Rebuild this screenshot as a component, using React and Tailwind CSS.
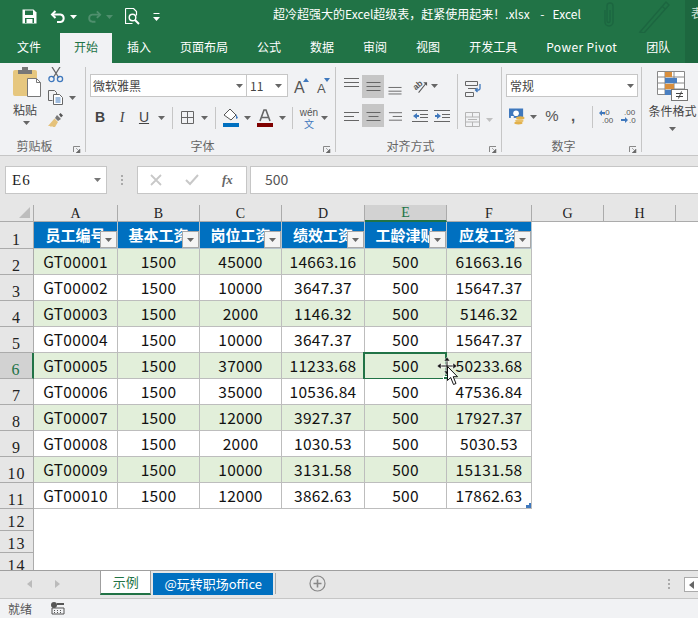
import React from "react";

const CJK = "[font-family:'Noto_Sans_CJK_SC',sans-serif]";
const HEADF = "[font-family:'Liberation_Serif','Noto_Sans_CJK_SC',serif]";
const SANS = "[font-family:'Liberation_Sans',sans-serif]";
const SERIF = "[font-family:'Liberation_Serif',serif]";

const Caret = ({ c = "#666" }) => (
  <svg width="7" height="4" viewBox="0 0 7 4" className="block"><path d="M0 0h7L3.5 4z" fill={c} /></svg>
);
const Slot = ({ className = "", children }) => (
  <div className={"flex items-center justify-center shrink-0 " + className}>{children}</div>
);
const Launcher = () => (
  <svg width="8" height="7" viewBox="0 0 8 7" className="block">
    <path d="M.5 6V.5H7" fill="none" stroke="#888" />
    <path d="M3 2l3.5 3.5M7 3v4H3z" fill="#666" stroke="#777" strokeWidth=".6" />
  </svg>
);
const Lines = ({ ys, align = "left" }) => (
  <svg width="15" height="23" viewBox="0 0 15 23" className="block">
    {ys.map(([y, w], i) => {
      const x = align === "left" ? 0 : align === "right" ? 15 - w : (15 - w) / 2;
      return <rect key={i} x={x} y={y} width={w} height="1" fill="#666" />;
    })}
  </svg>
);
const VSep = ({ className = "" }) => <div className={"w-px bg-[#c6c6c6] " + className} />;

const GroupLabel = ({ text }) => (
  <div className="mt-auto mb-[-2px] flex items-center h-[16px]">
    <span className={"flex-1 text-center text-[12px] leading-[16px] text-[#666] " + CJK}>{text}</span>
    <div className="w-[16px] flex justify-end pr-[4px] pt-[6px]"><Launcher /></div>
  </div>
);

const TitleBar = () => (
  <div className="relative h-[33px] flex items-center bg-[#217346] shrink-0">
    <Slot className="ml-[20px] w-[18px]">
      <svg width="15" height="15" viewBox="0 0 15 15">
        <path d="M.5.5h11l3 3v11H.5z" fill="#fff" />
        <rect x="3" y="1.5" width="8" height="4.5" fill="#217346" />
        <rect x="3" y="9" width="9" height="5" fill="#217346" />
        <rect x="4.5" y="10" width="6" height="4" fill="#fff" />
      </svg>
    </Slot>
    <Slot className="ml-[11px] w-[17px]">
      <svg width="16" height="14" viewBox="0 0 16 14" fill="none" stroke="#fff" strokeWidth="2">
        <path d="M3 4.5h7.5a3.8 3.8 0 0 1 0 7.5H7" />
        <path d="M5.5 1L2 4.5 5.5 8" />
      </svg>
    </Slot>
    <Slot className="ml-[3px] w-[8px]"><Caret c="#fff" /></Slot>
    <Slot className="ml-[8px] w-[18px]">
      <svg width="15" height="14" viewBox="0 0 16 14" fill="none" stroke="#4f8f6d" strokeWidth="2">
        <path d="M13 4.5H5.5a3.8 3.8 0 0 0 0 7.5H9" />
        <path d="M10.5 1L14 4.5 10.5 8" />
      </svg>
    </Slot>
    <Slot className="ml-[2px] w-[8px]"><Caret c="#4f8f6d" /></Slot>
    <Slot className="ml-[9px] w-[20px]">
      <svg width="15" height="17" viewBox="0 0 15 17" fill="none" stroke="#fff">
        <path d="M.5.5h8l3 3v4M.5.5v15h7" strokeWidth="1.2" />
        <circle cx="7.5" cy="9.5" r="3.3" strokeWidth="1.4" />
        <path d="M10 12l4 4" strokeWidth="2" />
      </svg>
    </Slot>
    <Slot className="ml-[9px] w-[10px]">
      <svg width="7" height="8" viewBox="0 0 7 8"><rect width="6" height="1" x=".5" fill="#fff" /><path d="M0 4h7L3.5 8z" fill="#fff" /></svg>
    </Slot>
    <span className={"ml-[112px] mb-[6px] text-[12px] leading-[16px] text-white whitespace-pre " + CJK}>超冷超强大的Excel超级表，赶紧使用起来！.xlsx    -   Excel</span>
    <svg className="absolute left-[600px] top-0" width="80" height="33" viewBox="0 0 80 33" fill="none" stroke="#1c6640" strokeWidth="1.4">
      <path d="M5 10v12a4 4 0 0 0 8 0V6a3 3 0 0 0-6 0v15a1.500 1.500 0 0 0 3 0V10" />
      <path d="M40 32L66 2l3 3-25 28zM62 6l3 3" />
    </svg>
    <div className="absolute right-0 top-0 w-[13px] h-[63px] bg-[#1d673f] overflow-hidden">
      <span className={"block ml-[6px] mt-[5px] text-[12px] leading-[16px] text-[#cfe3d8] whitespace-nowrap " + CJK}>表</span>
    </div>
  </div>
);

const tabs = ["文件", "开始", "插入", "页面布局", "公式", "数据", "审阅", "视图", "开发工具", "Power Pivot", "团队"];
const TabBar = () => (
  <div className="h-[30px] flex bg-[#217346] pl-[3px] shrink-0">
    {tabs.map((t) => (
      <div key={t} className={"h-[30px] px-[14px] pb-[2px] flex items-center text-[12px] whitespace-nowrap " + CJK + (t === "开始" ? " bg-[#f1f2f4] text-[#217346] mr-px" : t === "文件" ? " text-white mr-[5px]" : " text-white mr-px")}>
        {t === "Power Pivot" ? <span className="tracking-[0.4px]">{t}</span> : t}
      </div>
    ))}
  </div>
);

const Clipboard = () => (
  <div className="w-[86px] h-[85px] mt-[4px] border-r border-[#c6c6c6] flex flex-col shrink-0">
    <div className="flex">
      <div className="ml-[13px] w-[28px] flex flex-col items-start">
        <svg width="29" height="30" viewBox="0 0 29 30" className="block">
          <rect y="3" width="24" height="26" rx="2" fill="#e6c77f" />
          <path d="M5 7V3h4V0h6v3h4v4z" fill="#777" />
          <path d="M14.500 11.500h9l4 4v14h-13z" fill="#fff" stroke="#777" />
          <path d="M23.500 11.500v4h4" fill="none" stroke="#777" />
        </svg>
        <span className={"mt-[5px] text-[12px] leading-[16px] text-[#444] whitespace-nowrap " + CJK}>粘贴</span>
        <div className="mt-[3px] ml-[10px]"><Caret /></div>
      </div>
      <div className="ml-[7px] flex flex-col">
        <svg width="16" height="16" viewBox="0 0 16 16" fill="none" className="block">
          <path d="M4 0l7 11M12 0L5 11" stroke="#666" strokeWidth="1.3" />
          <circle cx="3.500" cy="12" r="2.600" stroke="#3f78bd" strokeWidth="1.300" />
          <circle cx="12" cy="12" r="2.600" stroke="#3f78bd" strokeWidth="1.300" />
        </svg>
        <div className="mt-[7px] flex items-center">
          <svg width="16" height="15" viewBox="0 0 16 15" fill="none" className="block">
            <path d="M.5.5h6l2 2v2M.5.5v10h4" stroke="#666" />
            <path d="M5.500 4.500h6l3 3v7h-9z" fill="#fff" stroke="#666" />
            <path d="M7.500 8h5M7.500 10h5M7.500 12h5" stroke="#3f78bd" />
          </svg>
          <div className="ml-[5px]"><Caret /></div>
        </div>
        <svg width="16" height="15" viewBox="0 0 16 15" className="block mt-[8px]">
          <path d="M9 2l4 4-3 2-3-3z" fill="#777" />
          <path d="M11 1.500l1.500-1.500 2.500 2.500-2 2z" fill="#555" />
          <path d="M6.500 5.500l3.500 3.500-3 5H5l-1-1-1 1-1-1-2 0z" fill="#e5c27a" />
        </svg>
      </div>
    </div>
    <GroupLabel text="剪贴板" />
  </div>
);

const Font = () => (
  <div className="w-[250px] h-[85px] mt-[4px] border-r border-[#c6c6c6] flex flex-col shrink-0">
    <div className="flex items-center pl-[4px] pt-[7px]">
      <div className="w-[157px] h-[23px] bg-white border border-[#c6c6c6] flex items-center justify-between pl-[2px] pr-[3px]">
        <span className={"text-[12px] text-[#444] " + CJK}>微软雅黑</span><Caret />
      </div>
      <div className="w-[41px] h-[23px] bg-white border border-[#c6c6c6] border-l-0 flex items-center justify-between pl-[3px] pr-[5px]">
        <span className={"text-[12px] text-[#444] " + CJK}>11</span><Caret />
      </div>
      <div className="ml-[6px] w-[15px] h-[20px] flex items-start">
        <span className={"mt-[3px] text-[16px] leading-[18px] text-[#555] " + SANS}>A</span>
        <svg width="6" height="4" viewBox="0 0 6 4" className="block mt-[2px] ml-[-2px]"><path d="M0 4l3-4 3 4z" fill="#3f78bd" /></svg>
      </div>
      <div className="ml-[8px] w-[15px] h-[20px] flex items-start">
        <span className={"mt-[5px] text-[13px] leading-[15px] text-[#555] " + SANS}>A</span>
        <svg width="6" height="4" viewBox="0 0 6 4" className="block mt-[2px] ml-[-2px]"><path d="M0 0h6L3 4z" fill="#3f78bd" /></svg>
      </div>
    </div>
    <div className="flex items-center pl-[4px] mt-[11px] h-[19px]">
      <Slot className={"w-[20px] text-[14px] font-bold text-[#444] " + SANS}>B</Slot>
      <Slot className={"w-[24px] text-[14px] italic text-[#444] " + SERIF}>I</Slot>
      <Slot className={"w-[20px] text-[14px] underline text-[#444] " + SANS}>U</Slot>
      <Slot className="w-[14px]"><Caret /></Slot>
      <Slot className="w-[8px]"><VSep className="h-[22px]" /></Slot>
      <Slot className="w-[22px]">
        <svg width="13" height="13" viewBox="0 0 13 13" fill="none" stroke="#666"><path d="M.5.5h12v12H.5zM6.500.5v12M.5 6.500h12" /></svg>
      </Slot>
      <Slot className="w-[12px]"><Caret /></Slot>
      <Slot className="w-[10px]"><VSep className="h-[22px]" /></Slot>
      <Slot className="w-[22px]">
        <svg width="16" height="20" viewBox="0 0 16 20">
          <path d="M1 7l6-6 6 6-5 5z" fill="#fff" stroke="#555" />
          <path d="M13 6l2 4-2 1z" fill="#3f78bd" />
          <rect y="15" width="16" height="4" fill="#0070c0" />
        </svg>
      </Slot>
      <Slot className="w-[10px]"><Caret /></Slot>
      <Slot className="w-[26px]">
        <svg width="16" height="20" viewBox="0 0 16 20">
          <path d="M3 13L7 2h2l4 11M4.500 9.500h7" fill="none" stroke="#666" strokeWidth="1.600" />
          <rect y="15" width="16" height="4" fill="#7f0000" />
        </svg>
      </Slot>
      <Slot className="w-[8px]"><Caret /></Slot>
      <Slot className="w-[12px]"><VSep className="h-[22px]" /></Slot>
      <Slot className="w-[22px] flex-col">
        <span className={"text-[10px] leading-[11px] text-[#555] " + SANS}>wén</span>
        <span className={"text-[10px] leading-[11px] text-[#3f78bd] " + CJK}>文</span>
      </Slot>
      <Slot className="w-[8px]"><Caret /></Slot>
    </div>
    <GroupLabel text="字体" />
  </div>
);

const Align = () => (
  <div className="w-[166px] h-[85px] mt-[4px] border-r border-[#c6c6c6] flex flex-col shrink-0">
    <div className="flex pl-[8px] pt-[6px]">
      <div className="flex flex-col w-[96px]">
        <div className="flex items-center h-[25px] pt-[1px]">
          <Slot className="w-[15px] h-[23px]"><Lines ys={[[3, 15], [7, 15], [11, 15]]} /></Slot>
          <Slot className="ml-[3px] w-[22px] h-[23px] bg-[#c6c6c6]"><Lines ys={[[7, 14], [11, 14], [15, 14]]} align="center" /></Slot>
          <Slot className="ml-[4px] w-[14px] h-[23px]"><Lines ys={[[12, 14], [16, 14], [19, 14]]} align="center" /></Slot>
          <Slot className="ml-[10px] w-[16px]">
            <svg width="17" height="17" viewBox="0 0 17 17" fill="none">
              <text x="1" y="11" fontSize="9" fontWeight="700" fill="#555" fontFamily="'Liberation Sans'" transform="rotate(-40 5 8)">ab</text>
              <path d="M7 15L15 5" stroke="#555" strokeWidth="1.100" />
              <path d="M12 4h4v4z" fill="#555" />
            </svg>
          </Slot>
          <Slot className="w-[12px]"><Caret /></Slot>
        </div>
        <div className="flex items-center h-[23px] mt-[6px]">
          <Slot className="w-[15px] h-[23px]"><Lines ys={[[8, 15], [12, 10], [16, 15]]} /></Slot>
          <Slot className="ml-[3px] w-[22px] h-[23px] bg-[#c6c6c6]"><Lines ys={[[8, 14], [12, 10], [16, 14]]} align="center" /></Slot>
          <Slot className="ml-[4px] w-[14px] h-[23px]"><Lines ys={[[8, 14], [12, 10], [16, 14]]} align="right" /></Slot>
          <Slot className="ml-[10px] w-[16px]">
            <svg width="16" height="14" viewBox="0 0 16 14">
              <path d="M0 1h16v1H0zM8 5h8v1H8zM8 8h8v1H8zM0 12h16v1H0z" fill="#666" />
              <path d="M1 7l4-3v2h2v2H5v2z" fill="#3f78bd" />
            </svg>
          </Slot>
          <Slot className="ml-[6px] w-[16px]">
            <svg width="16" height="14" viewBox="0 0 16 14">
              <path d="M0 1h16v1H0zM8 5h8v1H8zM8 8h8v1H8zM0 12h16v1H0z" fill="#666" />
              <path d="M7 7L3 4v2H1v2h2v2z" fill="#3f78bd" />
            </svg>
          </Slot>
        </div>
      </div>
      <VSep className="ml-[17px] h-[55px] mt-[1px]" />
      <div className="ml-[7px] flex flex-col">
        <svg width="18" height="16" viewBox="0 0 18 16" fill="none" className="block mt-[8px]">
          <path d="M.5.5h12v4H.5zM.5 11.500h8v4h-8z" stroke="#666" />
          <path d="M3 7.500h8" stroke="#666" />
          <path d="M15 3v4.500a1.500 1.500 0 0 1-1.500 1.500H11M12.500 7L10.500 9l2 2" stroke="#3f78bd" strokeWidth="1.300" />
        </svg>
        <div className="flex items-center mt-[15px]">
          <svg width="15" height="15" viewBox="0 0 15 15" fill="none" stroke="#b5b5b5" className="block">
            <path d="M.5.5h14v14H.5zM.5 5h14M.5 10h14M7.500.5V5M7.500 10v4.500M3 7.500h9" />
          </svg>
          <div className="ml-[6px]"><Caret c="#c0c0c0" /></div>
        </div>
      </div>
    </div>
    <GroupLabel text="对齐方式" />
  </div>
);

const Num = () => (
  <div className="w-[140px] h-[85px] mt-[4px] border-r border-[#c6c6c6] flex flex-col shrink-0">
    <div className="pl-[4px] pt-[7px]">
      <div className="w-[132px] h-[23px] bg-white border border-[#c6c6c6] flex items-center justify-between pl-[3px] pr-[3px]">
        <span className={"text-[12px] text-[#444] " + CJK}>常规</span><Caret />
      </div>
    </div>
    <div className="flex items-center pl-[7px] mt-[8px] h-[23px]">
      <Slot className="w-[16px]">
        <svg width="17" height="17" viewBox="0 0 17 17">
          <rect width="15" height="10" fill="#3f78bd" />
          <ellipse cx="7.500" cy="5" rx="3" ry="3" fill="#fff" />
          <rect x="2" y="8" width="3" height="2" fill="#fff" />
          <ellipse cx="12" cy="10" rx="4.500" ry="1.700" fill="#e2b04a" />
          <ellipse cx="11" cy="13" rx="4.500" ry="1.700" fill="#e8c06a" />
          <ellipse cx="10" cy="15.500" rx="4.500" ry="1.500" fill="#e2b04a" />
        </svg>
      </Slot>
      <Slot className="w-[16px]"><Caret /></Slot>
      <Slot className={"w-[14px] ml-[4px] text-[15px] text-[#555] " + SANS}>%</Slot>
      <Slot className={"w-[12px] ml-[8px] text-[15px] font-bold text-[#555] " + SANS}>,</Slot>
      <Slot className="w-[9px] ml-[1px]"><span /></Slot>
      <Slot className="w-[6px]"><VSep className="h-[22px]" /></Slot>
      <Slot className="ml-[4px] w-[16px]">
        <svg width="16" height="15" viewBox="0 0 16 15">
          <text x="4" y="6" fontSize="8" fill="#555" fontFamily="'Liberation Sans'">.0</text>
          <text x="3" y="14" fontSize="8" fill="#555" fontFamily="'Liberation Sans'">.00</text>
          <path d="M0 4l3-3v2h3v2H3v2z" fill="#3f78bd" />
        </svg>
      </Slot>
      <Slot className="ml-[6px] w-[16px]">
        <svg width="16" height="15" viewBox="0 0 16 15">
          <text x="3" y="6" fontSize="8" fill="#555" fontFamily="'Liberation Sans'">.00</text>
          <text x="8" y="14" fontSize="8" fill="#555" fontFamily="'Liberation Sans'">.0</text>
          <path d="M7 11L4 8v2H0v2h4v2z" fill="#3f78bd" />
        </svg>
      </Slot>
    </div>
    <GroupLabel text="数字" />
  </div>
);

const Cond = () => (
  <div className="flex-1 h-[85px] mt-[4px] flex flex-col items-center overflow-hidden pl-[5px] pt-[4px]">
    <svg width="31" height="31" viewBox="0 0 31 31" className="block shrink-0">
      <path d="M.5.500h27v23H.5zM.5 6h27M.5 12h27M.5 18h27M8 .5v23M17 .5v23" fill="#fff" stroke="#888" />
      <rect x="8" y="1" width="7" height="5" fill="#d98f3d" />
      <rect x="8" y="7" width="12" height="5" fill="#4a7fc1" />
      <rect x="8" y="13" width="9" height="5" fill="#d98f3d" />
      <rect x="8" y="19" width="6" height="5" fill="#4a7fc1" />
      <rect x="14.500" y="18.500" width="16" height="11" fill="#fff" stroke="#777" />
      <path d="M19 22.500h7M19 25.500h7M24.500 20.500l-3 7" stroke="#444" fill="none" />
    </svg>
    <span className={"mt-[1px] text-[12px] leading-[16px] text-[#444] whitespace-nowrap " + CJK}>条件格式</span>
    <div className="mt-[8px]"><Caret /></div>
  </div>
);

const Ribbon = () => (
  <div className="h-[93px] bg-[#f1f2f4] border-b border-[#c6c6c6] flex shrink-0">
    <Clipboard /><Font /><Align /><Num /><Cond />
  </div>
);

const FormulaBar = () => (
  <div className="h-[49px] bg-[#e6e6e6] flex items-start pt-[10px] pl-[5px] shrink-0">
    <div className="w-[102px] h-[28px] bg-white border border-[#c6c6c6] flex items-center justify-between pl-[6px] pr-[5px]">
      <span className={"text-[15px] tracking-[1px] text-[#222] " + HEADF}>E6</span>
      <Caret c="#777" />
    </div>
    <div className="w-[30px] h-[28px] flex flex-col items-center justify-center gap-[2px]">
      <i className="block w-[2px] h-[2px] bg-[#aaa]" /><i className="block w-[2px] h-[2px] bg-[#aaa]" /><i className="block w-[2px] h-[2px] bg-[#aaa]" />
    </div>
    <div className="w-[110px] h-[28px] bg-white border border-[#c6c6c6] flex items-center pl-[12px]">
      <svg width="12" height="12" viewBox="0 0 12 12" stroke="#c8c8c8" strokeWidth="1.800" fill="none" className="block"><path d="M1 1l10 10M11 1L1 11" /></svg>
      <svg width="14" height="12" viewBox="0 0 14 12" stroke="#c8c8c8" strokeWidth="2" fill="none" className="block ml-[23px]"><path d="M1 6l4 4 8-9" /></svg>
      <span className={"ml-[23px] text-[13px] italic font-bold text-[#666] " + SERIF}>fx</span>
    </div>
    <div className={"ml-[3px] flex-1 h-[28px] pb-[2px] bg-white border border-[#c6c6c6] border-r-0 flex items-center pl-[14px] text-[14px] text-[#555] " + CJK}>500</div>
  </div>
);

const cols = [
  ["A", "w-[84px]"], ["B", "w-[82px]"], ["C", "w-[82px]"], ["D", "w-[83px]"],
  ["E", "w-[82px]"], ["F", "w-[85px]"], ["G", "w-[72px]"], ["H", "w-[72px]"],
];
const heads = ["员工编号", "基本工资", "岗位工资", "绩效工资", "工龄津贴", "应发工资"];
const data = [
  ["GT00001", "1500", "45000", "14663.16", "500", "61663.16"],
  ["GT00002", "1500", "10000", "3647.37", "500", "15647.37"],
  ["GT00003", "1500", "2000", "1146.32", "500", "5146.32"],
  ["GT00004", "1500", "10000", "3647.37", "500", "15647.37"],
  ["GT00005", "1500", "37000", "11233.68", "500", "50233.68"],
  ["GT00006", "1500", "35000", "10536.84", "500", "47536.84"],
  ["GT00007", "1500", "12000", "3927.37", "500", "17927.37"],
  ["GT00008", "1500", "2000", "1030.53", "500", "5030.53"],
  ["GT00009", "1500", "10000", "3131.58", "500", "15131.58"],
  ["GT00010", "1500", "12000", "3862.63", "500", "17862.63"],
];

const RowHead = ({ n, h, active }) => (
  <div className={"w-[34px] shrink-0 border-b border-r border-[#ababab] flex items-end justify-center text-[16px] leading-[17px] tracking-[1px] " + h + " " + HEADF + (active ? " bg-[#d2d2d2] text-[#217346] border-r-2 border-r-[#217346]" : " bg-[#e6e6e6] text-[#222]")}>{n}</div>
);

const Sheet = () => (
  <div className="relative flex-1 overflow-hidden bg-white">
    <div className="flex h-[17px]">
      <div className="w-[34px] h-[17px] bg-[#e6e6e6] border-r border-b border-[#ababab] flex items-end justify-end pr-[3px] pb-[3px] shrink-0">
        <svg width="11" height="11" viewBox="0 0 11 11" className="block"><path d="M11 0v11H0z" fill="#bdbdbd" /></svg>
      </div>
      {cols.map(([c, w]) => (
        <div key={c} className={w + " shrink-0 h-[17px] border-r flex items-center justify-center text-[14px] " + HEADF + (c === "E" ? " bg-[#d2d2d2] text-[#217346] border-[#ababab] border-b-2 border-b-[#217346]" : " bg-[#e6e6e6] text-[#222] border-[#ababab] border-b")}>{c}</div>
      ))}
      <div className="flex-1 bg-[#e6e6e6] border-b border-[#ababab]" />
    </div>
    <div className="flex h-[27px]">
      <RowHead n={1} h="h-[27px]" />
      {heads.map((t, i) => (
        <div key={t} className={cols[i][1] + " shrink-0 relative h-[27px] bg-[#0070c0] border-r border-b border-[#b8c4cc] overflow-hidden flex items-center justify-center text-white font-bold text-[15px] whitespace-nowrap " + CJK}>
          {t}
          <div className="absolute right-0 bottom-0 w-[17px] h-[17px] bg-[#f4f4f4] border border-[#a8a8a8] flex items-center justify-center"><Caret c="#666" /></div>
        </div>
      ))}
    </div>
    {data.map((r, ri) => (
      <div key={ri} className="flex h-[26px]">
        <RowHead n={ri + 2} h="h-[26px]" active={ri === 4} />
        {r.map((v, ci) => (
          <div key={ci} className={cols[ci][1] + " shrink-0 relative h-[26px] border-r border-b border-[#bdbdbd] flex items-center justify-center text-[15.5px] tracking-[0.3px] text-[#111] " + CJK + (ri % 2 === 0 ? " bg-[#e2efda]" : " bg-white")}>
            {v}
            {ri === 4 && ci === 4 && (
              <div className="absolute left-[-2px] top-[-1px] w-[84px] h-[28px] border-2 border-[#217346]">
                <div className="absolute right-[-4px] bottom-[-4px] w-[6px] h-[6px] bg-[#217346] border border-white" />
              </div>
            )}
            {ri === 9 && ci === 5 && (
              <svg width="5" height="5" viewBox="0 0 5 5" className="absolute right-0 bottom-0"><path d="M5 0v5H0V2h3V0z" fill="#3f78bd" /></svg>
            )}
          </div>
        ))}
      </div>
    ))}
    <RowHead n={12} h="h-[22px]" />
    <RowHead n={13} h="h-[22px]" />
    <RowHead n={14} h="h-[22px]" />
    <svg className="absolute left-[437px] top-[152px]" width="22" height="30" viewBox="0 0 22 30" fill="none">
      <path d="M10 2v16M2 9h16" stroke="#fff" strokeWidth="3" />
      <path d="M10 2v16M2 9h16" stroke="#111" strokeWidth="1" />
      <path d="M10 0l3 4H7zM10 18l3-4H7zM0 9l4-3v6zM20 9l-4-3v6z" fill="#111" stroke="#fff" strokeWidth=".5" />
      <path d="M10.500 9.500v14l3.200-3 2.800 7 2.500-1-2.800-6.800h4.300z" fill="#fff" stroke="#111" />
    </svg>
  </div>
);

const SheetTabs = () => (
  <div className="h-[29px] bg-[#e6e6e6] border-t border-t-[#9f9f9f] border-b border-b-[#c6c6c6] flex items-start shrink-0">
    <Slot className="ml-[26px] w-[6px] h-[25px]">
      <svg width="5" height="8" viewBox="0 0 5 8" className="block"><path d="M5 0v8L0 4z" fill="#bbb" /></svg>
    </Slot>
    <Slot className="ml-[22px] w-[6px] h-[25px]">
      <svg width="5" height="8" viewBox="0 0 5 8" className="block"><path d="M0 0v8l5-4z" fill="#bbb" /></svg>
    </Slot>
    <div className={"ml-[40px] w-[52px] h-[24px] bg-white border-x border-[#9f9f9f] border-b-2 border-b-[#217346] flex items-center justify-center text-[13px] text-[#217346] " + CJK}>示例</div>
    <div className={"ml-[2px] mt-[2px] w-[121px] h-[22px] bg-[#0070c0] flex items-center justify-center text-[13px] text-white whitespace-nowrap " + CJK}>@玩转职场office</div>
    <div className="ml-[2px] mt-[2px] w-px h-[21px] bg-[#aaa]" />
    <Slot className="ml-[33px] mt-[4px] w-[17px] h-[17px]">
      <svg width="17" height="17" viewBox="0 0 17 17" fill="none" stroke="#888"><circle cx="8.500" cy="8.500" r="7.500" strokeWidth="1.200" /><path d="M8.500 4.500v8M4.500 8.500h8" strokeWidth="1.600" /></svg>
    </Slot>
    <div className="ml-[342px] mt-[8px] flex flex-col gap-[2px]">
      <i className="block w-[2px] h-[2px] bg-[#aaa]" /><i className="block w-[2px] h-[2px] bg-[#aaa]" /><i className="block w-[2px] h-[2px] bg-[#aaa]" />
    </div>
    <div className="ml-[14px] mt-[6px] w-[14px] h-[15px] bg-white border border-r-0 border-[#aaa] flex items-center pl-[4px] shrink-0">
      <svg width="5" height="8" viewBox="0 0 5 8" className="block"><path d="M5 0v8L0 4z" fill="#666" /></svg>
    </div>
  </div>
);

const Status = () => (
  <div className="h-[19px] shrink-0 bg-[#f1f2f4] flex items-center pl-[8px]">
    <span className={"text-[12px] text-[#555] " + CJK}>就绪</span>
    <svg width="14" height="13" viewBox="0 0 14 13" className="block ml-[19px]">
      <circle cx="3" cy="3" r="3" fill="#555" />
      <path d="M6 1h7v2H6z" fill="#555" />
      <path d="M1 6h12v6H1z" fill="none" stroke="#555" />
      <path d="M3 8h1v1H3zM6 8h1v1H6zM9 8h1v1H9zM3 10h1v1H3zM6 10h1v1H6zM9 10h1v1H9z" fill="#555" />
    </svg>
  </div>
);

export default function App() {
  return (
    <div className="w-[698px] h-[618px] overflow-hidden flex flex-col bg-white">
      <TitleBar />
      <TabBar />
      <Ribbon />
      <FormulaBar />
      <Sheet />
      <SheetTabs />
      <Status />
    </div>
  );
}
